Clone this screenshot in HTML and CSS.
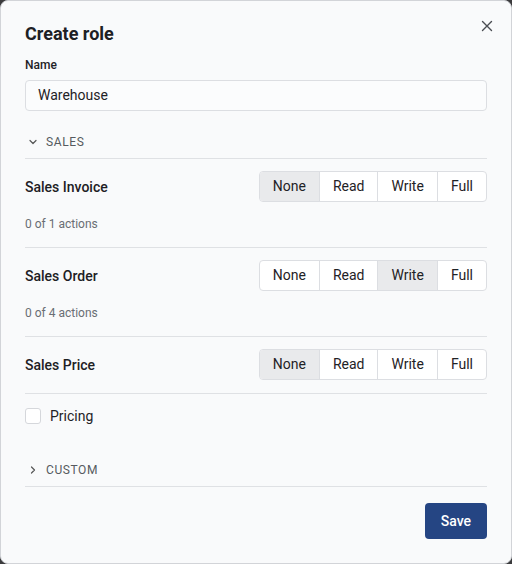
FILE: index.html
```html
<!DOCTYPE html>
<html lang="en">
<head>
<meta charset="utf-8">
<title>Create role</title>
<link rel="stylesheet" href="styles.css">
</head>
<body>
<div class="dialog">
  <div class="header">
    <h1 class="title">Create role</h1>
    <button class="close" aria-label="Close">
      <svg width="12" height="12" viewBox="0 0 12 12"><path d="M1.5 1.5 L10.5 10.5 M10.5 1.5 L1.5 10.5" stroke="#4a4d52" stroke-width="1.4" fill="none" stroke-linecap="round"/></svg>
    </button>
  </div>
  <label class="field-label">Name</label>
  <div class="input">Warehouse</div>

  <div class="section-head">
    <svg class="chev" width="10" height="10" viewBox="0 0 10 10"><path d="M2 3.5 L5 6.5 L8 3.5" stroke="#555" stroke-width="1.2" fill="none" stroke-linecap="round" stroke-linejoin="round"/></svg>
    <span>SALES</span>
  </div>

  <div class="perm">
    <div class="perm-head">
      <span class="perm-name">Sales Invoice</span>
      <div class="seg">
        <span class="opt on">None</span><span class="opt">Read</span><span class="opt">Write</span><span class="opt">Full</span>
      </div>
    </div>
    <div class="actions">0 of 1 actions</div>
  </div>

  <div class="perm">
    <div class="perm-head">
      <span class="perm-name">Sales Order</span>
      <div class="seg">
        <span class="opt">None</span><span class="opt">Read</span><span class="opt on">Write</span><span class="opt">Full</span>
      </div>
    </div>
    <div class="actions">0 of 4 actions</div>
  </div>

  <div class="perm short">
    <div class="perm-head">
      <span class="perm-name">Sales Price</span>
      <div class="seg">
        <span class="opt on">None</span><span class="opt">Read</span><span class="opt">Write</span><span class="opt">Full</span>
      </div>
    </div>
  </div>

  <div class="checks">
    <label class="check"><span class="box"></span><span>Pricing</span></label>
  </div>

  <div class="section-head custom">
    <svg class="chev" width="10" height="10" viewBox="0 0 10 10"><path d="M3.5 2 L6.5 5 L3.5 8" stroke="#555" stroke-width="1.2" fill="none" stroke-linecap="round" stroke-linejoin="round"/></svg>
    <span>CUSTOM</span>
  </div>

  <div class="footer">
    <button class="save">Save</button>
  </div>
</div>
</body>
</html>
```

FILE: styles.css
```css
html, body {
  margin: 0;
  padding: 0;
  background: #3b3b3d;
}
body {
  font-family: Roboto, "Liberation Sans", sans-serif;
  color: #1f2226;
}
.dialog {
  box-sizing: border-box;
  width: 512px;
  height: 564px;
  background: #f9fafb;
  border: 1px solid #d2d4d8;
  border-radius: 8px;
  padding: 19px 24px 0 24px;
}
.header {
  display: flex;
  justify-content: space-between;
  align-items: flex-start;
  height: 28px;
}
.title {
  margin: 0;
  font-size: 18px;
  font-weight: 700;
  line-height: 28px;
  color: #1d2024;
}
.close {
  border: 0;
  background: none;
  padding: 0;
  margin: 0 -6px 0 0;
  width: 12px;
  height: 12px;
  display: flex;
}
.field-label {
  display: block;
  margin-top: 9px;
  font-size: 12px;
  font-weight: 500;
  line-height: 16px;
  color: #1f2226;
}
.input {
  box-sizing: border-box;
  margin-top: 7px;
  height: 31px;
  border: 1px solid #dcdee2;
  border-radius: 4px;
  background: #fbfcfd;
  padding: 0 12px;
  font-size: 14px;
  line-height: 29px;
  color: #1f2226;
}
.section-head {
  display: flex;
  align-items: center;
  gap: 8px;
  height: 32px;
  margin-top: 15px;
  padding-left: 3px;
  border-bottom: 1px solid #dfe1e4;
  font-size: 12px;
  letter-spacing: 0.6px;
  color: #565a60;
}
.section-head.custom { margin-top: 30px; }
.chev { display: block; }
.perm {
  padding: 12px 0 15px;
  border-bottom: 1px solid #dfe1e4;
}
.perm.short { padding-bottom: 13px; }
.perm-head {
  display: flex;
  justify-content: space-between;
  align-items: center;
  height: 31px;
}
.perm-name {
  font-size: 14px;
  font-weight: 500;
  color: #1d2024;
}
.seg {
  display: flex;
  border: 1px solid #dcdee2;
  border-radius: 4px;
  background: #ffffff;
  overflow: hidden;
  height: 29px;
}
.opt {
  padding: 0 13px;
  font-size: 14px;
  line-height: 29px;
  color: #1f2226;
  border-left: 1px solid #dcdee2;
}
.opt:first-child { border-left: 0; }
.opt.on { background: #e9eaec; }
.actions {
  margin-top: 14px;
  font-size: 12px;
  line-height: 16px;
  color: #6a6e74;
}
.checks {
  padding-top: 14px;
  height: 16px;
}
.check {
  display: flex;
  align-items: center;
  gap: 9px;
  font-size: 14px;
  line-height: 16px;
  color: #1f2226;
}
.box {
  box-sizing: border-box;
  width: 16px;
  height: 16px;
  border: 1px solid #d5d7db;
  border-radius: 3px;
  background: #ffffff;
}
.footer {
  display: flex;
  justify-content: flex-end;
  padding-top: 16px;
}
.save {
  height: 36px;
  padding: 0 16px;
  border: 0;
  border-radius: 4px;
  background: #254583;
  color: #ffffff;
  font-family: inherit;
  font-size: 14px;
  font-weight: 500;
}
```
